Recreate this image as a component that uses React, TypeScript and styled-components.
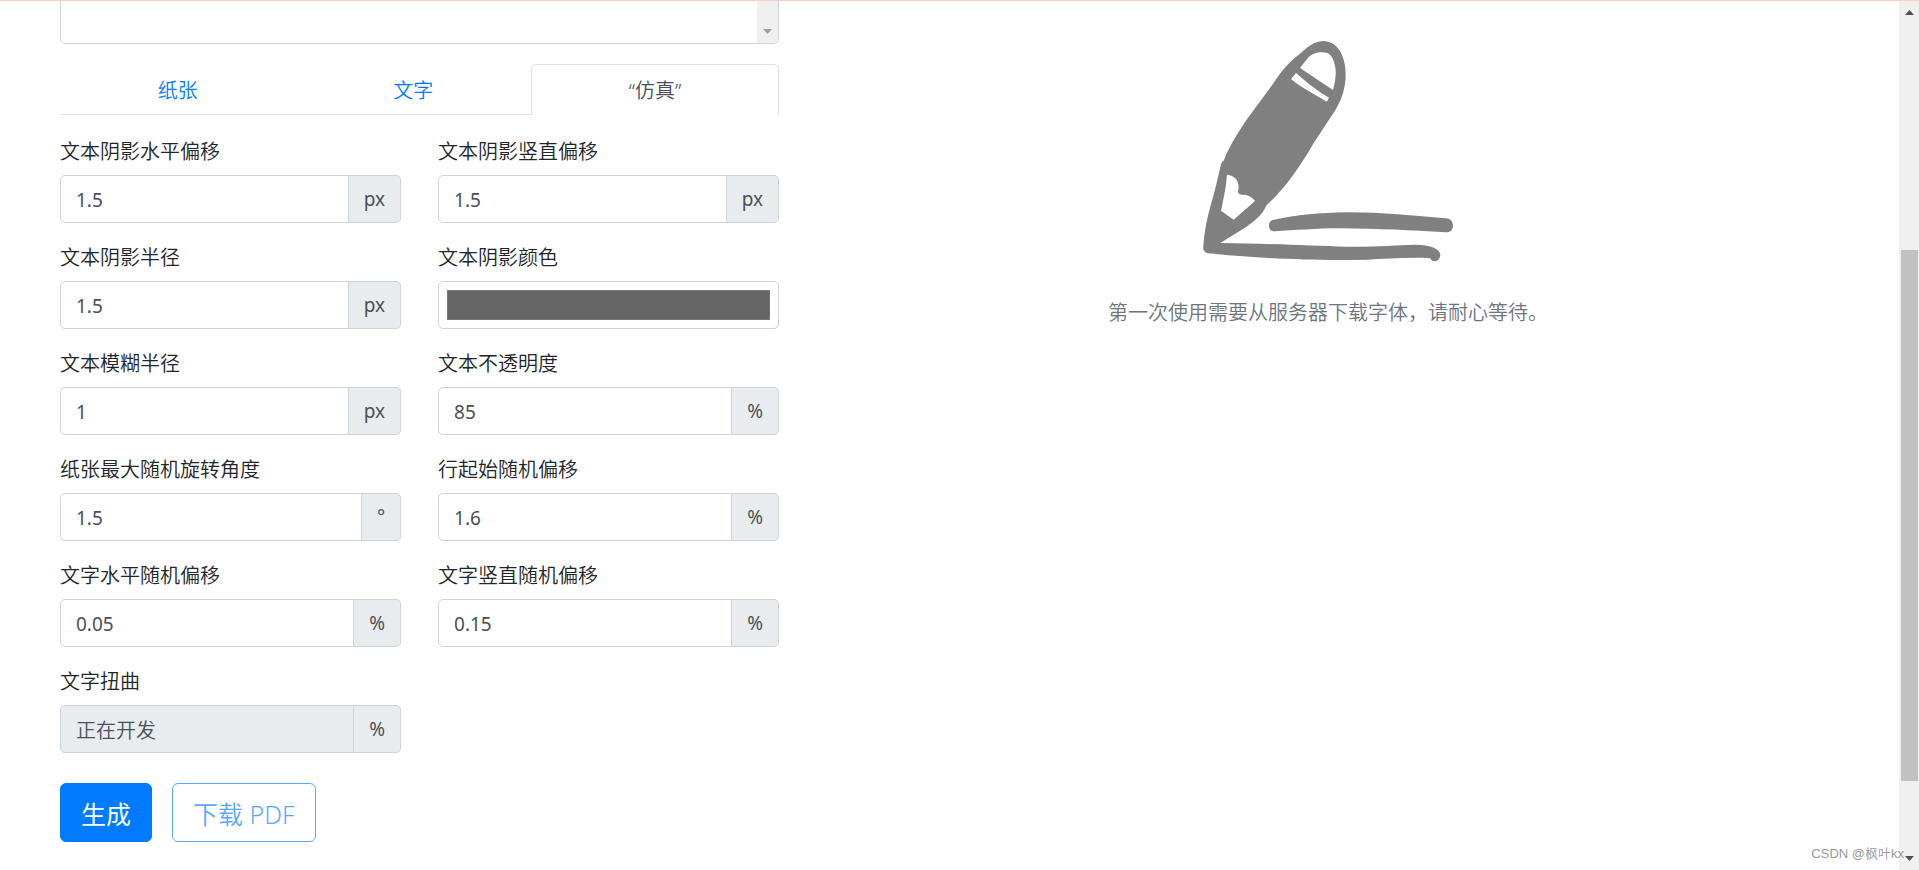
import React, { useState } from 'react';
import styled, { createGlobalStyle, css } from 'styled-components';

const GlobalStyle = createGlobalStyle`
  *, *::before, *::after {
    box-sizing: border-box;
  }

  body {
    margin: 0;
    background: #fff;
    color: #212529;
    font-family: 'Noto Sans', 'Noto Sans CJK SC', sans-serif;
    font-size: 20px;
    font-weight: 350;
    line-height: 30px;
  }

  button, input, textarea {
    font: inherit;
  }
`;

const Page = styled.div`
  position: relative;
  display: flex;
  flex-direction: column;
  min-height: 100vh;
`;

const TopLine = styled.div`
  height: 1px;
  background: #fbd0c0;
`;

const Body = styled.div`
  display: flex;
  flex: 1;
`;

const Columns = styled.main`
  display: grid;
  flex: 1;
  grid-template-columns: 5fr 7fr;
  padding: 0 41px;
`;

const FormColumn = styled.form`
  min-width: 0;
  padding: 0 19px;
`;

const PreviewColumn = styled.section`
  display: flex;
  flex-direction: column;
  align-items: center;
  gap: 37px;
  min-width: 0;
  padding: 40px 19px 0;
`;

const TextFrame = styled.div`
  display: flex;
  height: 43px;
  border: 1px solid #ced4da;
  border-top: 0;
  border-radius: 0 0 5px 5px;
  overflow: hidden;
`;

const TextArea = styled.textarea`
  flex: 1;
  min-width: 0;
  padding: 0 15px;
  border: 0;
  outline: 0;
  overflow: hidden;
  resize: none;
`;

const TextScroll = styled.div`
  display: flex;
  align-items: flex-end;
  justify-content: center;
  width: 21px;
  padding-bottom: 9px;
  background: #f0f0f0;
`;

const Arrow = styled.svg`
  display: block;
  width: 9px;
  height: 5px;
`;

const Tabs = styled.div`
  display: flex;
  margin-top: 20px;
  border-bottom: 1px solid #dee2e6;
`;

const Tab = styled.button<{ $active: boolean }>`
  flex: 1 1 auto;
  height: 51px;
  margin-bottom: -1px;
  padding: 2px 20px 0;
  border: 1px solid transparent;
  border-radius: 5px 5px 0 0;
  background: transparent;
  color: #007bff;
  cursor: pointer;

  ${({ $active }) =>
    $active &&
    css`
      border-color: #dee2e6 #dee2e6 #fff;
      background: #fff;
      color: #495057;
    `}
`;

const Fields = styled.div`
  display: grid;
  grid-template-columns: 1fr 1fr;
  gap: 20px 37px;
  margin-top: 22px;
`;

const Field = styled.div`
  display: flex;
  flex-direction: column;
  gap: 8px;
  min-width: 0;
`;

const Label = styled.label`
  line-height: 30px;
`;

const control = css`
  min-width: 0;
  height: 48px;
  border: 1px solid #ced4da;
  border-radius: 5px;
  background: #fff;
  color: #495057;
`;

const Group = styled.div`
  display: flex;
`;

const NumberInput = styled.input`
  ${control}
  flex: 1;
  padding: 2px 15px 0;
  border-radius: 5px 0 0 5px;
  font-size: 19px;
  font-weight: 400;
  outline: 0;

  &:disabled {
    background: #e9ecef;
    font-size: 20px;
    font-weight: 350;
  }

  &::placeholder {
    color: #495057;
    opacity: 1;
  }
`;

const Unit = styled.span`
  display: flex;
  align-items: center;
  padding: 0 15px;
  border: 1px solid #ced4da;
  border-left: 0;
  border-radius: 0 5px 5px 0;
  background: #e9ecef;
  color: #495057;
  font-size: 19px;
  font-weight: 400;
`;

const ColorInput = styled.input`
  ${control}
  width: 100%;
  padding: 8px;

  &::-webkit-color-swatch-wrapper {
    padding: 0;
  }

  &::-webkit-color-swatch {
    border: 1px solid #777;
    border-radius: 0;
  }
`;

const Actions = styled.div`
  display: flex;
  gap: 20px;
  margin: 30px 0 28px;
`;

const Action = styled.button<{ $outline?: boolean }>`
  height: 59px;
  padding: 2px 20px 0;
  border: 1px solid #007bff;
  border-radius: 6px;
  background: ${({ $outline }) => ($outline ? 'transparent' : '#007bff')};
  color: ${({ $outline }) => ($outline ? '#007bff' : '#fff')};
  font-size: 25px;
  font-weight: ${({ $outline }) => ($outline ? 350 : 400)};

  &:disabled {
    opacity: 0.65;
  }
`;

const Pencil = styled.svg`
  display: block;
  width: 250px;
  height: 220px;
  fill: #808080;
`;

const Hint = styled.p`
  margin: 0;
  color: #6c757d;
`;

const ScrollTrack = styled.div`
  display: flex;
  flex-direction: column;
  align-items: center;
  width: 20px;
  padding: 9px 1px 9px 2px;
  background: #f0f0f0;
`;

const Spacer = styled.div<{ $grow: number }>`
  flex: ${({ $grow }) => $grow} 1 0;
`;

const Thumb = styled.div`
  flex: 531 1 0;
  align-self: stretch;
  background: #c1c1c1;
`;

const Watermark = styled.span`
  position: absolute;
  right: 15px;
  bottom: 6px;
  color: #999;
  font-family: 'Liberation Sans', 'Noto Sans CJK SC', sans-serif;
  font-size: 13px;
  line-height: 20px;
`;

type FieldSpec = {
  id: string;
  label: string;
  unit?: string;
  value?: string;
  placeholder?: string;
};

const fields: FieldSpec[] = [
  { id: 'shadow-x', label: '文本阴影水平偏移', value: '1.5', unit: 'px' },
  { id: 'shadow-y', label: '文本阴影竖直偏移', value: '1.5', unit: 'px' },
  { id: 'shadow-radius', label: '文本阴影半径', value: '1.5', unit: 'px' },
  { id: 'shadow-color', label: '文本阴影颜色', value: '#666666' },
  { id: 'blur', label: '文本模糊半径', value: '1', unit: 'px' },
  { id: 'opacity', label: '文本不透明度', value: '85', unit: '%' },
  { id: 'rotation', label: '纸张最大随机旋转角度', value: '1.5', unit: '°' },
  { id: 'line-start', label: '行起始随机偏移', value: '1.6', unit: '%' },
  { id: 'offset-x', label: '文字水平随机偏移', value: '0.05', unit: '%' },
  { id: 'offset-y', label: '文字竖直随机偏移', value: '0.15', unit: '%' },
  { id: 'distort', label: '文字扭曲', placeholder: '正在开发', unit: '%' },
];

const tabs = ['纸张', '文字', '“仿真”'];

function FormField({ id, label, unit, value, placeholder }: FieldSpec) {
  return (
    <Field>
      <Label htmlFor={id}>{label}</Label>
      {unit ? (
        <Group>
          <NumberInput
            id={id}
            type="text"
            defaultValue={value}
            placeholder={placeholder}
            disabled={placeholder !== undefined}
          />
          <Unit>{unit}</Unit>
        </Group>
      ) : (
        <ColorInput id={id} type="color" defaultValue={value} />
      )}
    </Field>
  );
}

function PencilArt() {
  return (
    <Pencil viewBox="69 62 750 660" aria-hidden="true">
      <path
        fillRule="evenodd"
        d="M430 62C470 62 497 103 497 162C497 205 484 243 458 282C433 321 407 357 382 400C350 452 310 509 260 554C245 588 218 607 190 625L121 668C260 669 390 677 500 679C590 680 650 674 706 673C753 673 781 686 781 704C780 715 774 722 764 723C756 722 753 719 751 714C690 710 620 715 560 718C430 722 280 715 190 708C150 706 110 701 84 699C72 696 68 688 70 678C75 600 95 550 107 500L123 432C124 425 128 423 131 421C151 371 177 333 203 294L280 189C305 151 331 122 358 102C382 82 397 64 430 62Z
        M427 96C408 96 396 102 386 110C378 120 368 133 360 143L459 209C464 190 468 172 467 150C463 113 452 96 427 96Z
        M348 158L333 176C363 202 405 222 440 244L447 232C416 214 380 187 348 158Z
        M141 463C166 466 179 483 175 508C171 517 177 523 186 523C203 522 217 530 225 542L161 598L123 571C131 535 138 500 141 463Z"
      />
      <path d="M282 598C350 584 420 577 500 576C590 575 700 586 798 594C811 595 819 603 819 616C819 629 810 636 797 636C690 630 600 625 480 624C410 624 340 630 285 633C273 633 267 627 267 616C267 605 272 600 282 598Z" />
    </Pencil>
  );
}

export default function App() {
  const [active, setActive] = useState(2);

  return (
    <>
      <GlobalStyle />
      <Page lang="zh-CN">
        <TopLine />
        <Body>
          <Columns>
            <FormColumn onSubmit={(e) => e.preventDefault()}>
              <TextFrame>
                <TextArea aria-label="正文" />
                <TextScroll>
                  <Arrow viewBox="0 0 9 5" fill="#a0a0a0">
                    <path d="M0 0h9L4.500 5z" />
                  </Arrow>
                </TextScroll>
              </TextFrame>
              <Tabs role="tablist">
                {tabs.map((name, i) => (
                  <Tab
                    key={name}
                    type="button"
                    role="tab"
                    aria-selected={i === active}
                    $active={i === active}
                    onClick={() => setActive(i)}
                  >
                    {name}
                  </Tab>
                ))}
              </Tabs>
              <Fields>
                {fields.map((field) => (
                  <FormField key={field.id} {...field} />
                ))}
              </Fields>
              <Actions>
                <Action type="submit">生成</Action>
                <Action type="button" $outline disabled>
                  下载 PDF
                </Action>
              </Actions>
            </FormColumn>
            <PreviewColumn>
              <PencilArt />
              <Hint>第一次使用需要从服务器下载字体，请耐心等待。</Hint>
            </PreviewColumn>
          </Columns>
          <ScrollTrack aria-hidden="true">
            <Arrow viewBox="0 0 9 5" fill="#505050">
              <path d="M0 5h9L4.500 0z" />
            </Arrow>
            <Spacer $grow={235} />
            <Thumb />
            <Spacer $grow={75} />
            <Arrow viewBox="0 0 9 5" fill="#505050">
              <path d="M0 0h9L4.500 5z" />
            </Arrow>
          </ScrollTrack>
        </Body>
        <Watermark>CSDN @枫叶kx</Watermark>
      </Page>
    </>
  );
}
